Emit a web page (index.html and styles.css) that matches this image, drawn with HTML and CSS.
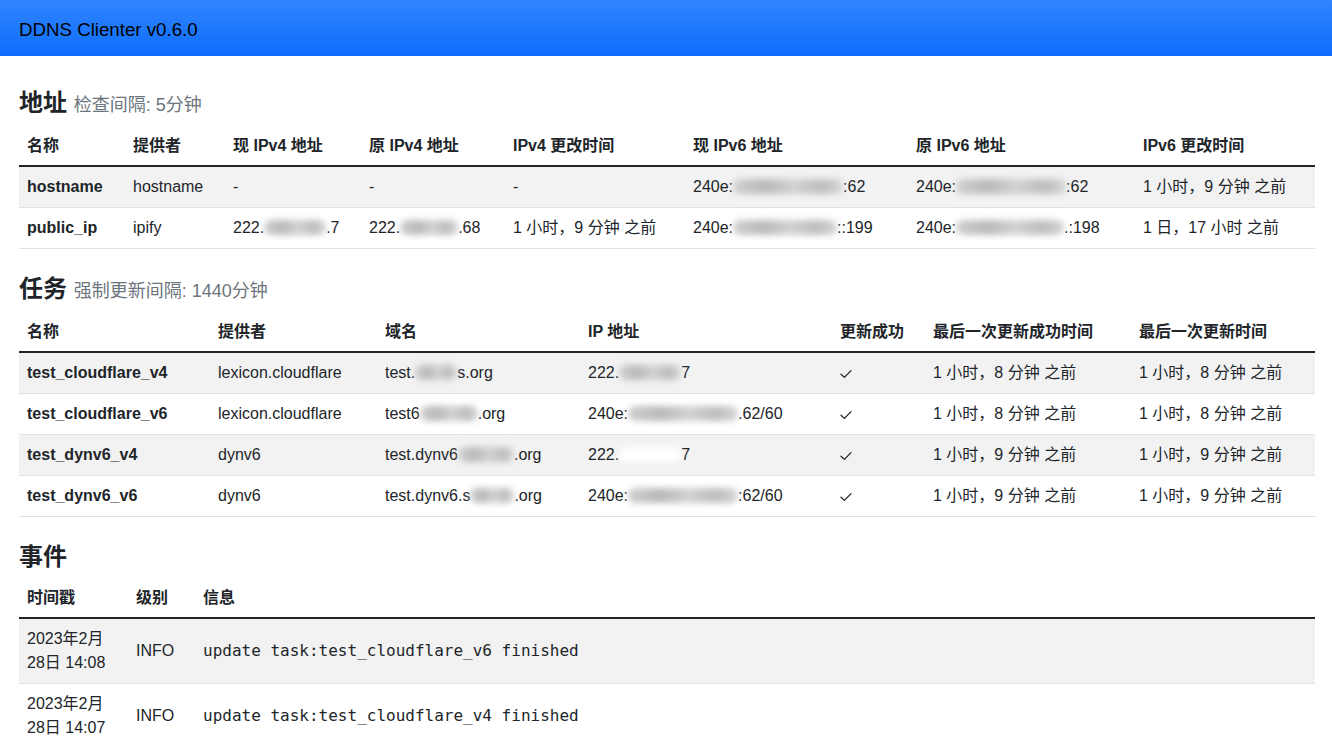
FILE: index.html
```html
<!DOCTYPE html>
<html lang="zh">
<head>
<meta charset="utf-8">
<title>DDNS Clienter</title>
<link rel="stylesheet" href="styles.css">
</head>
<body>
<header class="navbar"><span class="brand">DDNS Clienter v0.6.0</span></header>
<main class="main">
  <h2 class="sec-title">地址 <small class="sec-note">检查间隔: 5分钟</small></h2>
  <table class="tbl">
    <colgroup>
      <col class="c106"><col class="c100"><col class="c136"><col class="c144"><col class="c180"><col class="c223"><col class="c227"><col class="c180">
    </colgroup>
    <thead>
      <tr><th>名称</th><th>提供者</th><th>现 IPv4 地址</th><th>原 IPv4 地址</th><th>IPv4 更改时间</th><th>现 IPv6 地址</th><th>原 IPv6 地址</th><th>IPv6 更改时间</th></tr>
    </thead>
    <tbody>
      <tr class="odd"><th>hostname</th><td>hostname</td><td>-</td><td>-</td><td>-</td><td>240e:<span class="blur w110"></span>:62</td><td>240e:<span class="blur w110"></span>:62</td><td>1 小时，9 分钟 之前</td></tr>
      <tr><th>public_ip</th><td>ipify</td><td>222.<span class="blur w62"></span>.7</td><td>222.<span class="blur w58"></span>.68</td><td>1 小时，9 分钟 之前</td><td>240e:<span class="blur w104"></span>::199</td><td>240e:<span class="blur w108"></span>.:198</td><td>1 日，17 小时 之前</td></tr>
    </tbody>
  </table>

  <h2 class="sec-title">任务 <small class="sec-note">强制更新间隔: 1440分钟</small></h2>
  <table class="tbl">
    <colgroup>
      <col class="c191"><col class="c167"><col class="c203"><col class="c252"><col class="c93"><col class="c206"><col class="c184">
    </colgroup>
    <thead>
      <tr><th>名称</th><th>提供者</th><th>域名</th><th>IP 地址</th><th>更新成功</th><th>最后一次更新成功时间</th><th>最后一次更新时间</th></tr>
    </thead>
    <tbody>
      <tr class="odd"><th>test_cloudflare_v4</th><td>lexicon.cloudflare</td><td>test.<span class="blur w42"></span>s.org</td><td>222.<span class="blur w62"></span>7</td><td><svg class="check" viewBox="0 0 12 10" width="12" height="10"><polyline points="1,5.2 4.4,8.4 11,1.6" /></svg></td><td>1 小时，8 分钟 之前</td><td>1 小时，8 分钟 之前</td></tr>
      <tr><th>test_cloudflare_v6</th><td>lexicon.cloudflare</td><td>test6<span class="blur w58"></span>.org</td><td>240e:<span class="blur w110"></span>.62/60</td><td><svg class="check" viewBox="0 0 12 10" width="12" height="10"><polyline points="1,5.2 4.4,8.4 11,1.6" /></svg></td><td>1 小时，8 分钟 之前</td><td>1 小时，8 分钟 之前</td></tr>
      <tr class="odd"><th>test_dynv6_v4</th><td>dynv6</td><td>test.dynv6<span class="blur w56"></span>.org</td><td>222.<span class="blur white w62"></span>7</td><td><svg class="check" viewBox="0 0 12 10" width="12" height="10"><polyline points="1,5.2 4.4,8.4 11,1.6" /></svg></td><td>1 小时，9 分钟 之前</td><td>1 小时，9 分钟 之前</td></tr>
      <tr><th>test_dynv6_v6</th><td>dynv6</td><td>test.dynv6.s<span class="blur w44"></span>.org</td><td>240e:<span class="blur w110"></span>:62/60</td><td><svg class="check" viewBox="0 0 12 10" width="12" height="10"><polyline points="1,5.2 4.4,8.4 11,1.6" /></svg></td><td>1 小时，9 分钟 之前</td><td>1 小时，9 分钟 之前</td></tr>
    </tbody>
  </table>

  <h2 class="sec-title">事件</h2>
  <table class="tbl">
    <colgroup>
      <col class="c109"><col class="c67"><col class="c1120">
    </colgroup>
    <thead>
      <tr><th>时间戳</th><th>级别</th><th>信息</th></tr>
    </thead>
    <tbody>
      <tr class="odd"><td>2023年2月<br>28日 14:08</td><td>INFO</td><td><code class="msg">update task:test_cloudflare_v6 finished</code></td></tr>
      <tr><td>2023年2月<br>28日 14:07</td><td>INFO</td><td><code class="msg">update task:test_cloudflare_v4 finished</code></td></tr>
    </tbody>
  </table>
</main>
</body>
</html>
```

FILE: styles.css
```css
html, body {
  margin: 0;
  padding: 0;
  background: #fff;
}

body {
  font-family: "Liberation Sans", "Noto Sans CJK SC", sans-serif;
  font-size: 16px;
  line-height: 1.5;
  color: #212529;
}

.navbar {
  height: 56px;
  display: flex;
  align-items: center;
  padding: 0 19px;
  background-color: #0d6efd;
  background-image: linear-gradient(180deg, rgba(255, 255, 255, 0.15), rgba(255, 255, 255, 0));
}

.brand {
  font-size: 18.7px;
  color: #000;
  line-height: 1;
  padding-top: 4px;
}

.main {
  padding: 32px 17px 0 19px;
}

.sec-title {
  margin: 0 0 7px;
  font-size: 24px;
  line-height: 30px;
  font-weight: 700;
  color: #212529;
}

.sec-note {
  font-size: 18px;
  font-weight: 400;
  color: #6c757d;
}

.tbl {
  width: 100%;
  table-layout: fixed;
  border-collapse: collapse;
  margin-bottom: 25px;
}

.tbl th,
.tbl td {
  padding: 8px;
  text-align: left;
  vertical-align: middle;
  border-bottom: 1px solid #dee2e6;
  white-space: nowrap;
}

.tbl th {
  font-weight: 700;
}

.tbl thead th {
  padding: 7px 8px;
  border-bottom: 2px solid #212529;
}

.tbl tbody tr.odd > * {
  background: #f2f2f2;
}

.tbl td:first-child {
  white-space: normal;
}

.c67 { width: 67px; }
.c93 { width: 93px; }
.c100 { width: 100px; }
.c106 { width: 106px; }
.c109 { width: 109px; }
.c136 { width: 136px; }
.c144 { width: 144px; }
.c167 { width: 167px; }
.c180 { width: 180px; }
.c184 { width: 184px; }
.c191 { width: 191px; }
.c203 { width: 203px; }
.c206 { width: 206px; }
.c223 { width: 223px; }
.c227 { width: 227px; }
.c252 { width: 252px; }
.c1120 { width: 1120px; }

.blur {
  display: inline-block;
  height: 15px;
  vertical-align: -2px;
  border-radius: 7px;
  background: linear-gradient(90deg, #cfcfcf, #b9b9b9 30%, #d2d2d2 55%, #bdbdbd 80%, #d6d6d6);
  filter: blur(3px);
}

.blur.white {
  background: #fff;
}

.w42 { width: 42px; }
.w44 { width: 44px; }
.w56 { width: 56px; }
.w58 { width: 58px; }
.w62 { width: 62px; }
.w104 { width: 104px; }
.w108 { width: 108px; }
.w110 { width: 110px; }

.check {
  display: inline-block;
  vertical-align: middle;
}

.check polyline {
  fill: none;
  stroke: #212529;
  stroke-width: 1.3;
  stroke-linecap: round;
  stroke-linejoin: round;
}

.msg {
  font-family: "DejaVu Sans Mono", "Liberation Mono", monospace;
  font-size: 16px;
  color: #212529;
}
```
